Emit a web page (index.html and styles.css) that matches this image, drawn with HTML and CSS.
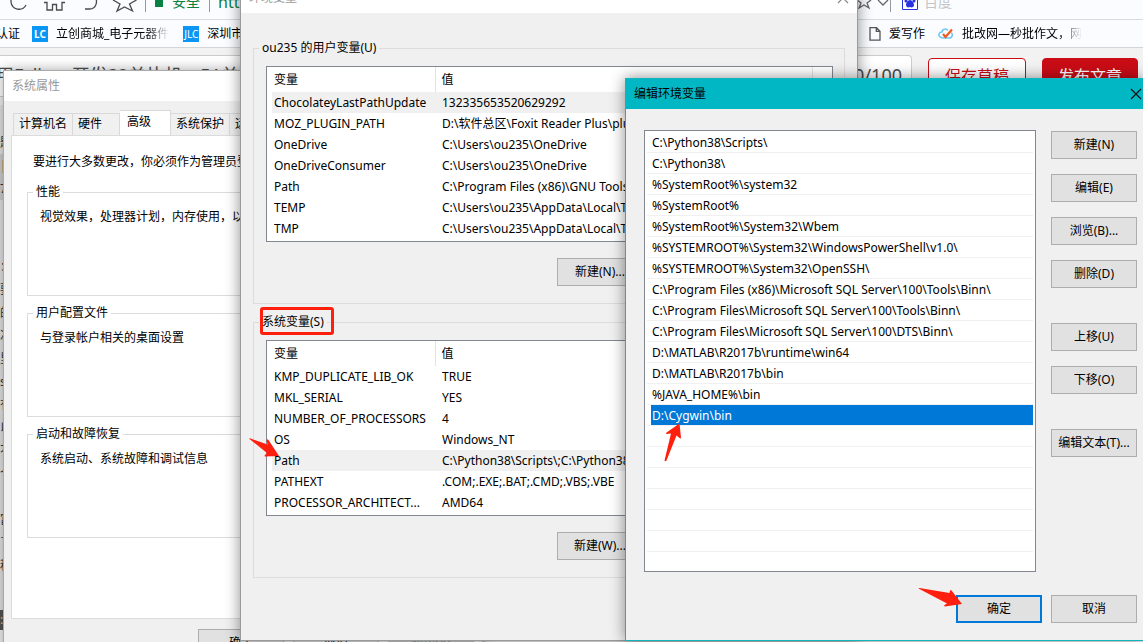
FILE: index.html
```html
<!DOCTYPE html>
<html lang="zh-CN">
<head>
<meta charset="utf-8">
<title>环境变量</title>
<link rel="stylesheet" href="styles.css">
</head>
<body>
<div class="desktop">

  <div class="browser">
    <div class="navbar">
      <svg class="nav-icons" width="128" height="14" viewBox="0 0 128 14" fill="none" stroke="#4a4a4a" stroke-width="1.3">
        <path d="M2 0v2a8 8 0 0 0 15 3"/>
        <path d="M35 2.500h3V10h5.500V4.500h4V10H53V2.500h3"/>
        <path d="M84 -4a7 7 0 0 1-4 13h-4"/>
        <path d="M104 0l7 4-3 7 7.500-4 8 4-3-7 7-4"/>
      </svg>
      <span class="divider"></span>
      <span class="lock"></span>
      <span class="secure">安全</span>
      <span class="divider"></span>
      <span class="url">https://</span>
      <div class="nav-right">
        <svg width="34" height="12" viewBox="0 0 34 12" fill="none" stroke="#666" stroke-width="1.300">
          <path d="M1 0l4 3-2 5 5-3 5 3-2-5 4-3"/>
          <path d="M22 0l5 5 5-5"/>
        </svg>
        <span class="divider"></span>
        <svg width="16" height="10" viewBox="0 0 16 10">
          <path d="M.5-6h15v15.500H.5z" fill="#fff" stroke="#2932e1"/>
          <path d="M8 0c2 0 4 3 4 5 0 2-2 3-4 2-2 1-4 0-4-2 0-2 2-5 4-5z" fill="#2932e1"/>
          <circle cx="4" cy="1" r="1.500" fill="#2932e1"/><circle cx="12" cy="1" r="1.500" fill="#2932e1"/>
        </svg>
        <span class="search-hint">百度</span>
      </div>
    </div>
    <div class="bookmarks">
      <a class="mark mark-cut" href="#">认证</a>
      <a class="mark" href="#"><span class="tile tile-lc">LC</span><span class="fade">立创商城_电子元器件</span></a>
      <a class="mark" href="#"><span class="tile">JLC</span><span>深圳市嘉立创</span></a>
      <div class="marks-right">
        <a class="mark" href="#">
          <svg width="12" height="14" viewBox="0 0 12 14" fill="none" stroke="#555" stroke-width="1.300"><path d="M1 .7h6.500l3.500 3.500v9H1zM7.300.7v3.700h3.700"/></svg>
          <span>爱写作</span>
        </a>
        <a class="mark" href="#">
          <svg width="16" height="12" viewBox="0 0 16 12" fill="none"><path d="M10 2.500C8 0 4 1 4 4 1 4 0 7 2 9c1 1 3 1 5 1h4c4 0 4-5 2-5" stroke="#6ec9f0" stroke-width="1.600"/><path d="M5 6l2.500 3L14 1.500" stroke="#ee5a24" stroke-width="2.200"/></svg>
          <span class="fade">批改网—秒批作文，网</span>
        </a>
      </div>
    </div>
    <div class="editor-head">
      <div class="article">
        <span>用Eclipse开发32单片机，51单片机</span>
        <span>20/100</span>
      </div>
      <button class="draft">保存草稿</button>
      <button class="publish">发布文章</button>
    </div>
    <div class="page-text">
      <p>题</p><p class="tinted">|<br>7</p><p class="copy">：<br>要<br>的<br>次<br>里<br>s<br>有<br>以<br>不<br>个<br><br>富<br>了<br>程</p>
      <p class="dark">:</p>
    </div>
  </div>

  <section class="window win-system">
    <header class="titlebar">系统属性</header>
    <div class="tabs">
      <button class="tab">计算机名</button>
      <button class="tab tab-short">硬件</button>
      <button class="tab tab-active">高级</button>
      <button class="tab">系统保护</button>
      <button class="tab">远程</button>
    </div>
    <div class="sheet">
      <p class="intro">要进行大多数更改，你必须作为管理员登录。</p>
      <fieldset class="group"><legend>性能</legend><p>视觉效果，处理器计划，内存使用，以及虚拟内存</p></fieldset>
      <fieldset class="group"><legend>用户配置文件</legend><p>与登录帐户相关的桌面设置</p></fieldset>
      <fieldset class="group"><legend>启动和故障恢复</legend><p>系统启动、系统故障和调试信息</p></fieldset>
    </div>
    <div class="row-end sys-actions">
      <button class="btn">确定</button><button class="btn">取消</button><button class="btn" disabled>应用(A)</button>
    </div>
  </section>

  <section class="window win-env">
    <header class="titlebar"><span>环境变量</span>
      <svg width="12" height="12" viewBox="0 0 12 12" stroke="#888" stroke-width="1.200"><path d="M1 1l10 10M11 1L1 11"/></svg>
    </header>
    <div class="env-body">
      <fieldset class="group vars">
        <legend>ou235 的用户变量(U)</legend>
        <div class="listbox">
          <table>
            <thead><tr><th class="name">变量</th><th>值</th><th class="spare"></th></tr></thead>
            <tbody>
              <tr class="current"><td>ChocolateyLastPathUpdate</td><td colspan="2">132335653520629292</td></tr>
              <tr><td>MOZ_PLUGIN_PATH</td><td colspan="2">D:\软件总区\Foxit Reader Plus\plugins\</td></tr>
              <tr><td>OneDrive</td><td colspan="2">C:\Users\ou235\OneDrive</td></tr>
              <tr><td>OneDriveConsumer</td><td colspan="2">C:\Users\ou235\OneDrive</td></tr>
              <tr><td>Path</td><td colspan="2">C:\Program Files (x86)\GNU Tools</td></tr>
              <tr><td>TEMP</td><td colspan="2">C:\Users\ou235\AppData\Local\Temp</td></tr>
              <tr><td>TMP</td><td colspan="2">C:\Users\ou235\AppData\Local\Temp</td></tr>
            </tbody>
          </table>
        </div>
        <div class="row-end">
          <button class="btn">新建(N)...</button><button class="btn">编辑(E)...</button><button class="btn">删除(D)</button>
        </div>
      </fieldset>
      <fieldset class="group vars">
        <legend>系统变量(S)</legend>
        <div class="listbox">
          <table>
            <thead><tr><th class="name">变量</th><th>值</th><th class="spare"></th></tr></thead>
            <tbody>
              <tr><td>KMP_DUPLICATE_LIB_OK</td><td colspan="2">TRUE</td></tr>
              <tr><td>MKL_SERIAL</td><td colspan="2">YES</td></tr>
              <tr><td>NUMBER_OF_PROCESSORS</td><td colspan="2">4</td></tr>
              <tr><td>OS</td><td colspan="2">Windows_NT</td></tr>
              <tr class="current"><td>Path</td><td colspan="2">C:\Python38\Scripts\;C:\Python38\</td></tr>
              <tr><td>PATHEXT</td><td colspan="2">.COM;.EXE;.BAT;.CMD;.VBS;.VBE</td></tr>
              <tr><td>PROCESSOR_ARCHITECT...</td><td colspan="2">AMD64</td></tr>
            </tbody>
          </table>
        </div>
        <div class="row-end">
          <button class="btn">新建(W)...</button><button class="btn">编辑(I)...</button><button class="btn">删除(L)</button>
        </div>
      </fieldset>
    </div>
  </section>

  <section class="window win-edit">
    <header class="titlebar"><span>编辑环境变量</span>
      <button class="close" aria-label="关闭"><svg width="12" height="12" viewBox="0 0 12 12" stroke="#111" stroke-width="1.200"><path d="M1 1l10 10M11 1L1 11"/></svg></button>
    </header>
    <div class="edit-body">
      <ul class="paths">
        <li>C:\Python38\Scripts\</li>
        <li>C:\Python38\</li>
        <li>%SystemRoot%\system32</li>
        <li>%SystemRoot%</li>
        <li>%SystemRoot%\System32\Wbem</li>
        <li>%SYSTEMROOT%\System32\WindowsPowerShell\v1.0\</li>
        <li>%SYSTEMROOT%\System32\OpenSSH\</li>
        <li>C:\Program Files (x86)\Microsoft SQL Server\100\Tools\Binn\</li>
        <li>C:\Program Files\Microsoft SQL Server\100\Tools\Binn\</li>
        <li>C:\Program Files\Microsoft SQL Server\100\DTS\Binn\</li>
        <li>D:\MATLAB\R2017b\runtime\win64</li>
        <li>D:\MATLAB\R2017b\bin</li>
        <li>%JAVA_HOME%\bin</li>
        <li class="selected"><span>D:\Cygwin\bin</span></li>
        <li></li><li></li><li></li><li></li><li></li><li></li><li></li>
      </ul>
      <div class="side">
        <div class="stack">
          <button class="btn">新建(N)</button><button class="btn">编辑(E)</button><button class="btn">浏览(B)...</button><button class="btn">删除(D)</button>
        </div>
        <div class="stack">
          <button class="btn">上移(U)</button><button class="btn">下移(O)</button>
        </div>
        <div class="stack"><button class="btn">编辑文本(T)...</button></div>
      </div>
    </div>
    <div class="row-end edit-actions">
      <button class="btn btn-default">确定</button><button class="btn">取消</button>
    </div>
  </section>

  <div class="callout"></div>
  <svg class="marks" width="1143" height="642" viewBox="0 0 1143 642" fill="#ff1f0f">
    <path d="M249.500 439q-.5-1 1-.5l17 6-1-4.500q.5-1.500 2 0L279 456l-14 .5q-1-.5 0-1.500l2-2z"/>
    <path d="M664.500 460.500l6.500-27-4.500.5q-1-.5 0-1.500L679.500 423.500l1.500 14q0 1.500-1.500.5l-3-2.500-10 25q-1 1.500-2 0z"/>
    <path d="M918.500 588.500q-.5-.5 1-.5l30 5 .5-2.500q.5-1 1.500 0L962 604l-17 2.500q-1.500-.5-.5-1.500l2.500-1.500z"/>
  </svg>
</div>
</body>
</html>
```
FILE: styles.css
```css
* { box-sizing: border-box; }
body {
  margin: 0;
  font: 12px/16px "Noto Sans", "Noto Sans CJK SC", sans-serif;
  color: #000;
}
p, ul { margin: 0; padding: 0; }
button { font: inherit; color: inherit; padding: 0; margin: 0; }
a { color: inherit; text-decoration: none; }
svg { flex: none; display: block; overflow: hidden; }

.desktop {
  position: relative;
  height: 100vh;
  overflow: hidden;
  background: #f2f2f2;
}

/* Browser behind the dialogs */
.navbar {
  display: flex;
  align-items: flex-start;
  height: 20px;
  padding-left: 9px;
  overflow: hidden;
  background: #fafcff;
  border-bottom: 1px solid #d9dade;
  line-height: 4px;
  white-space: nowrap;
}
.divider { flex: none; width: 1px; height: 12px; background: #999; }
.nav-icons { margin-right: 8px; }
.lock { width: 8px; height: 7px; margin-left: 9px; background: #0b8043; }
.secure { margin: 0 9px; font-size: 14px; color: #0b8043; }
.url { margin-left: 8px; font-size: 16px; color: #0b8043; }
.nav-right { display: flex; width: 287px; margin-left: auto; }
.nav-right svg + .divider { margin-right: 11px; }
.search-hint { margin-left: 6px; font-size: 14px; color: #c4c4c4; }

.bookmarks {
  display: flex;
  align-items: center;
  gap: 14px;
  height: 28px;
  background: #fafcff;
  border-bottom: 1px solid #d4d5d9;
  white-space: nowrap;
}
.mark { display: flex; align-items: center; gap: 8px; }
.mark-cut { width: 20px; margin-right: -2px; justify-content: flex-end; overflow: hidden; }
.tile { width: 16px; height: 16px; overflow: hidden; background: #0a96f5; color: #fff; font-size: 10px; text-align: center; }
.tile-lc { font-weight: bold; }
.fade { -webkit-mask-image: linear-gradient(to right, #000 80%, transparent); mask-image: linear-gradient(to right, #000 80%, transparent); }
.marks-right { display: flex; gap: 13px; width: 274px; margin-left: auto; }

.editor-head {
  display: flex;
  align-items: flex-start;
  gap: 16px;
  padding: 7px 5px 8px 0;
}
.article {
  flex: 1;
  display: flex;
  justify-content: space-between;
  height: 42px;
  padding: 0 9px 0 0;
  background: #fff;
  border: 1px solid #ccc;
  border-left: 0;
  border-radius: 0 4px 4px 0;
  font-size: 18px;
  line-height: 38px;
  color: #4d4d4d;
  text-indent: -4px;
}
.draft, .publish {
  height: 36px;
  margin-top: 3px;
  border: 1px solid #ca0c16;
  border-radius: 4px;
  font-size: 16px;
  line-height: 34px;
}
.draft { width: 98px; background: #fff; color: #ca0c16; }
.publish { width: 96px; background: #ca0c16; color: #fff; }
.page-text { width: 4px; padding-top: 26px; overflow: hidden; color: #333; background: #e4e4e4; line-height: 23px; }
.tinted { background: #cfcfcf; }
.copy { padding-top: 55px; }
.dark { margin-top: 33px; background: #555; color: #e0c060; line-height: 20px; }

/* Dialog windows */
.window { position: absolute; background: #f0f0f0; }
.titlebar {
  display: flex;
  align-items: center;
  justify-content: space-between;
  height: 31px;
  padding: 0 8px;
  background: #fff;
  color: #999;
}
.group {
  min-width: 0;
  margin: 0;
  padding: 0 12px;
  border: 1px solid #dcdcdc;
}
.group legend { margin-left: -7px; padding: 0 3px; height: 16px; }
.btn {
  width: 86px;
  height: 28px;
  background: #e1e1e1;
  border: 1px solid #adadad;
  white-space: nowrap;
}
.btn:disabled { background: #ccc; border-color: #bfbfbf; color: #838383; }
.btn-default { border: 2px solid #0078d7; }
.row-end { display: flex; justify-content: flex-end; gap: 9px; }

.win-system {
  left: 3px;
  top: 70px;
  width: 480px;
  border: 1px solid #aaa;
  box-shadow: 0 0 12px rgba(0, 0, 0, .35);
}
.win-system .titlebar { height: 30px; }
.tabs { display: flex; align-items: flex-end; padding: 9px 9px 0; }
.tab {
  height: 22px;
  padding: 0 5px 1px;
  background: #f0f0f0;
  border: 1px solid #d9d9d9;
  border-bottom: 0;
  border-left-width: 0;
}
.tab:first-child { border-left-width: 1px; }
.tab-short { padding-right: 17px; }
.tab-active { height: 25px; padding: 0 19px 3px 7px; background: #fff; }
.sheet {
  display: flex;
  flex-direction: column;
  gap: 9px;
  height: 484px;
  margin: 0 8px 0 7px;
  padding: 18px 15px 0;
  background: #fff;
  border: 1px solid #dcdcdc;
}
.sheet .intro { padding: 0 6px; margin-bottom: 5px; }
.sheet .group { height: 112px; padding: 9px 12px 0; }
.sys-actions { padding: 10px 8px 12px; }

.win-env {
  left: 240px;
  top: -18px;
  width: 618px;
  border: 1px solid #9a9a9a;
  border-top: 0;
  box-shadow: 0 0 14px rgba(0, 0, 0, .45);
}
.env-body { display: flex; flex-direction: column; gap: 10px; padding: 27px 12px 62px; }
.vars { padding: 10px 11px 17px 12px; }
.listbox { padding: 0 5px 2px; margin-bottom: 16px; background: #fff; border: 1px solid #828790; }
.listbox table { width: 100%; border-collapse: collapse; table-layout: fixed; }
.listbox tr { height: 21px; }
.listbox th { height: 25px; padding: 0 0 0 6px; font-weight: normal; text-align: left; border-left: 1px solid #e2e2e2; }
.listbox .name { width: 163px; padding-left: 2px; border-left: 0; }
.listbox .spare { width: 15px; }
.listbox td { padding: 0 0 0 7px; white-space: nowrap; overflow: hidden; }
.listbox td:first-child { padding-left: 2px; }
.current { background: #f0f0f0; }

.win-edit {
  left: 625px;
  right: -1px;
  top: 78px;
  border: 1px solid #12b5be;
  box-shadow: 0 0 14px rgba(0, 0, 0, .45);
}
.win-edit .titlebar { height: 30px; padding: 0 1px 0 8px; background: #00b7c3; color: #000; }
.close { display: flex; background: none; border: 0; }
.edit-body { display: flex; gap: 15px; padding: 21px 6px 0 18px; }
.paths { flex: 1; padding: 1px 2px 0; list-style: none; background: #fff; border: 1px solid #828790; }
.paths li { height: 21px; padding: 0 0 0 5px; line-height: 22px; border-bottom: 1px solid #f0f0f0; white-space: nowrap; }
.paths li:last-child { height: 19px; border-bottom: 0; }
.paths .selected { padding-left: 4px; }
.selected span { display: block; height: 20px; padding-left: 1px; background: #0078d7; color: #fff; }
.side { display: flex; flex-direction: column; gap: 35px; padding-top: 1px; }
.stack { display: flex; flex-direction: column; gap: 15px; }
.edit-actions { padding: 23px 6px 17px; }

/* Red annotations drawn over the windows */
.callout {
  position: absolute;
  left: 260px;
  top: 307px;
  width: 74px;
  height: 28px;
  border: 3px solid #ff1f0f;
  border-radius: 3px;
}
.marks { position: absolute; left: 0; top: 0; pointer-events: none; }
```
